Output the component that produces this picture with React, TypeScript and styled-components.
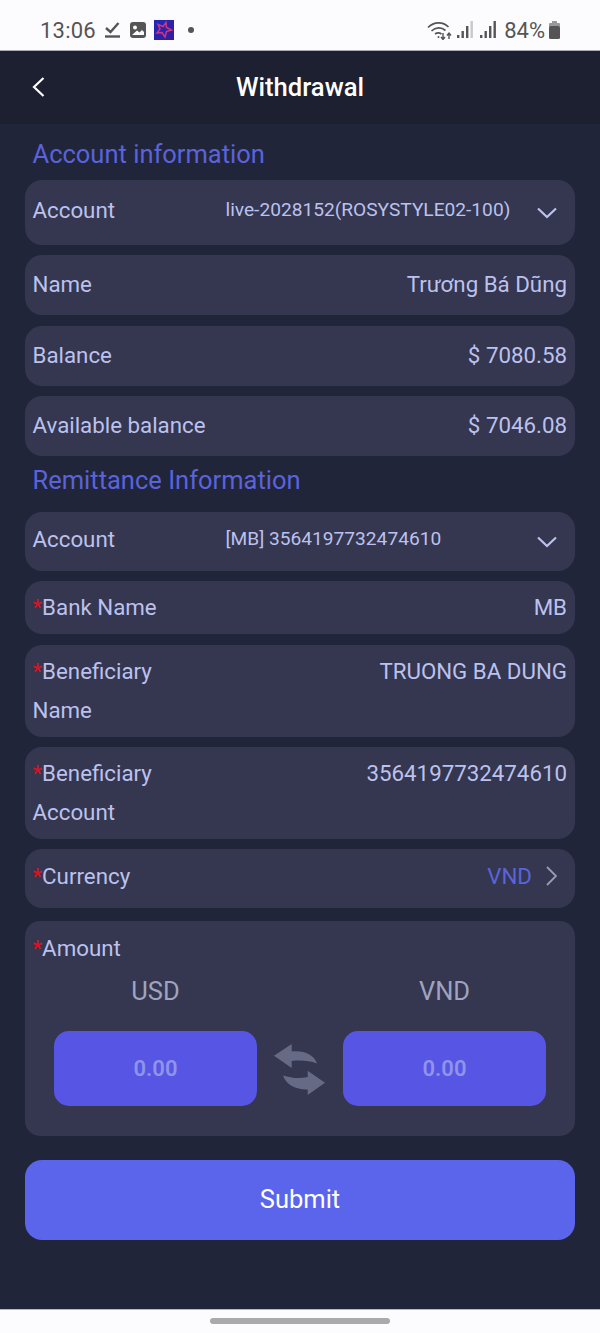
import React from "react";
import styled, { createGlobalStyle } from "styled-components";

const Global = createGlobalStyle`
  html, body { margin: 0; padding: 0; background: #212539; }
  * { box-sizing: border-box; }
`;

const Page = styled.div`
  width: 600px;
  height: 1333px;
  display: flex;
  flex-direction: column;
  overflow: hidden;
  font-family: Roboto, "Liberation Sans", sans-serif;
  background: #212539;
`;

const StatusBar = styled.div`
  height: 51px;
  flex: none;
  background: #fcfcfe;
  border-bottom: 1px solid #a9abb3;
  display: flex;
  align-items: center;
  justify-content: space-between;
  padding: 10px 40px 0;
  color: #555;
`;

const StatusGroup = styled.div`
  display: flex;
  align-items: center;
`;

const Clock = styled.span`
  font-size: 22px;
  letter-spacing: 0.2px;
  margin-right: 9px;
`;

const Percent = styled.span`
  font-size: 22px;
  margin: 0 4px 0 8px;
`;

const Header = styled.header`
  height: 73px;
  flex: none;
  background: #1c2030;
  display: flex;
  align-items: center;
  justify-content: center;
  padding-bottom: 2px;
  position: relative;
`;

const BackButton = styled.span`
  position: absolute;
  left: 32px;
  top: 25px;
  display: flex;
`;

const Title = styled.h1`
  margin: 0;
  font-size: 25.6px;
  font-weight: 500;
  color: #fff;
`;

const Content = styled.main`
  flex: 1;
  padding: 0 25px;
  display: flex;
  flex-direction: column;
`;

const SectionTitle = styled.h2<{ $top?: number; $bottom?: number }>`
  margin: 0;
  height: 56px;
  display: flex;
  align-items: center;
  padding: ${(p) => p.$top ?? 0}px 0 ${(p) => p.$bottom ?? 0}px 7.5px;
  font-size: 25.5px;
  font-weight: 400;
  color: #5a63dc;
`;

const Row = styled.div<{ $h: number; $mb?: number }>`
  height: ${(p) => p.$h}px;
  margin-bottom: ${(p) => p.$mb ?? 10}px;
  background: #34374f;
  border-radius: 17px;
  padding: 0 8px 2px 7.5px;
  display: flex;
  justify-content: space-between;
  align-items: center;
  font-size: 22.3px;
  color: #bcc1ee;
`;

const SelectRow = styled(Row)`
  padding-bottom: 6px;
`;

const CurrencyRow = styled(Row)`
  padding-bottom: 6px;
`;

const TallRow = styled(Row)`
  align-items: flex-start;
  padding-top: 7px;
  line-height: 38.5px;
`;

const Label = styled.span`
  display: block;
`;

const Line = styled.span`
  display: block;
`;

const Star = styled.span`
  color: #e1101f;
`;

const Value = styled.span``;

const SelectValue = styled.span`
  flex: 1;
  margin-left: 110.5px;
  font-size: 19.15px;
  white-space: nowrap;
`;

const Chevron = styled.span`
  display: flex;
  margin: 6px 10px 0 0;
`;

const CurrencyBox = styled.span`
  display: flex;
  align-items: center;
  gap: 14px;
  color: #5a63dc;
`;

const AmountCard = styled.section`
  height: 215px;
  margin-top: 3px;
  background: #34374f;
  border-radius: 15px;
  padding: 8px 29px 0;
`;

const AmountLabel = styled.div`
  margin-left: -21.5px;
  height: 38px;
  line-height: 38px;
  font-size: 22.3px;
  color: #bcc1ee;
`;

const Exchange = styled.div`
  display: grid;
  grid-template-columns: 203px 86px 203px;
  margin-top: 3px;
`;

const CurrencyName = styled.div`
  height: 42px;
  line-height: 42px;
  margin-bottom: 19px;
  text-align: center;
  font-size: 25.5px;
  color: #9fa3bf;
`;

const AmountField = styled.div`
  height: 75px;
  border-radius: 15px;
  background: #5755e3;
  display: flex;
  align-items: center;
  justify-content: center;
  font-size: 22px;
  font-weight: 600;
  color: #8f94ea;
`;

const SwapCell = styled.div`
  display: flex;
  align-items: center;
  justify-content: center;
  padding-top: 3px;
`;

const Submit = styled.button`
  height: 80px;
  width: 100%;
  margin-top: 24px;
  padding: 0 0 2px;
  border: 0;
  border-radius: 17px;
  background: #5a65ec;
  color: #fff;
  font-family: inherit;
  font-size: 25.5px;
`;

const NavBar = styled.footer`
  height: 24px;
  flex: none;
  background: #fcfcfe;
  border-top: 1px solid #b5b7bf;
  display: flex;
  justify-content: center;
  padding-top: 8px;
`;

const NavHandle = styled.div`
  width: 180px;
  height: 6px;
  border-radius: 3px;
  background: #aaaaac;
`;

const SignalGap = styled.span`
  width: 7px;
`;

const ChevronDown = () => (
  <svg width="20" height="12" viewBox="0 0 20 12" fill="none" stroke="#bcc1ee" strokeWidth="2.2">
    <path d="M1 1.5 L10 10 L19 1.5" />
  </svg>
);

const SignalBars = ({ last }: { last: string }) => (
  <svg width="16" height="18" viewBox="0 0 16 18">
    <rect x="0" y="14" width="2.4" height="3" fill="#555" />
    <rect x="4.5" y="10" width="2.4" height="7" fill="#555" />
    <rect x="9" y="5" width="2.4" height="12" fill="#555" />
    <rect x="13.5" y="0" width="2.4" height="17" fill={last} />
  </svg>
);

const App = () => (
  <Page>
    <Global />
    <StatusBar>
      <StatusGroup>
        <Clock>13:06</Clock>
        <svg width="15" height="16" viewBox="0 0 15 16" fill="none" stroke="#555" strokeWidth="2.4" style={{ marginRight: 10 }}>
          <path d="M1 6 L5.5 10 L13.5 1" />
          <path d="M0 14.5 H15" />
        </svg>
        <svg width="16" height="16" viewBox="0 0 16 16" style={{ marginRight: 8 }}>
          <rect width="16" height="16" rx="3" fill="#555" />
          <circle cx="5" cy="5.5" r="2" fill="#fcfcfe" />
          <path d="M2 13 L7 8.5 L9.5 10.5 L12 8 L14 10 V13 Z" fill="#fcfcfe" />
        </svg>
        <svg width="20" height="20" viewBox="0 0 20 20" style={{ marginRight: 14 }}>
          <defs>
            <linearGradient id="appBg" x1="0" y1="0" x2="1" y2="1">
              <stop offset="0" stopColor="#1d2bb8" />
              <stop offset="1" stopColor="#3a1a9c" />
            </linearGradient>
          </defs>
          <rect width="20" height="20" fill="url(#appBg)" />
          <path d="M12 2.5 L12.5 7.5 L17.5 10 L12.5 11.5 L11 17 L8 12.5 L3 13 L6 9 L4 4.5 L9 6.5 Z" fill="none" stroke="#d2357f" strokeWidth="1.5" />
        </svg>
        <svg width="6" height="6" viewBox="0 0 6 6">
          <circle cx="3" cy="3" r="3" fill="#555" />
        </svg>
      </StatusGroup>
      <StatusGroup>
        <svg width="25" height="19" viewBox="0 0 25 19" fill="none" stroke="#555" strokeWidth="1.7" style={{ marginRight: 5 }}>
          <path d="M1 6.5 C7 0.5 16 0.5 21.5 6" />
          <path d="M4.5 10 C8.5 6 14.5 6 18.5 9.5" />
          <path d="M8 13 C10 11.5 12.5 11.5 14.5 13" />
          <circle cx="11.5" cy="16" r="1" fill="#555" stroke="none" />
          <path d="M16 12 V18 M14 16 L16 18.5 L18 16" strokeWidth="1.4" />
          <path d="M22 18 V12.5 M20 14.5 L22 12 L24 14.5" strokeWidth="1.4" />
        </svg>
        <SignalBars last="#c8c8c8" />
        <SignalGap />
        <SignalBars last="#555" />
        <Percent>84%</Percent>
        <svg width="11" height="18" viewBox="0 0 11 18">
          <rect x="3" y="0" width="5" height="3" fill="#999" />
          <rect x="0" y="2" width="11" height="4" rx="1" fill="#999" />
          <rect x="0" y="5" width="11" height="13" rx="1.5" fill="#555" />
        </svg>
      </StatusGroup>
    </StatusBar>

    <Header>
      <BackButton>
        <svg width="13" height="22" viewBox="0 0 13 22" fill="none" stroke="#fff" strokeWidth="2.2">
          <path d="M11.5 2 L2 11 L11.5 20" />
        </svg>
      </BackButton>
      <Title>Withdrawal</Title>
    </Header>

    <Content>
      <SectionTitle $top={4}>Account information</SectionTitle>
      <SelectRow $h={65}>
        <Label>Account</Label>
        <SelectValue>live-2028152(ROSYSTYLE02-100)</SelectValue>
        <Chevron><ChevronDown /></Chevron>
      </SelectRow>
      <Row $h={60} $mb={11}>
        <Label>Name</Label>
        <Value>Trương Bá Dũng</Value>
      </Row>
      <Row $h={60}>
        <Label>Balance</Label>
        <Value>$ 7080.58</Value>
      </Row>
      <Row $h={60} $mb={0}>
        <Label>Available balance</Label>
        <Value>$ 7046.08</Value>
      </Row>
      <SectionTitle $bottom={8}>Remittance Information</SectionTitle>
      <SelectRow $h={59}>
        <Label>Account</Label>
        <SelectValue>[MB] 3564197732474610</SelectValue>
        <Chevron><ChevronDown /></Chevron>
      </SelectRow>
      <Row $h={53} $mb={11}>
        <Label><Star>*</Star>Bank Name</Label>
        <Value>MB</Value>
      </Row>
      <TallRow $h={92}>
        <Label>
          <Line><Star>*</Star>Beneficiary</Line>
          <Line>Name</Line>
        </Label>
        <Value>TRUONG BA DUNG</Value>
      </TallRow>
      <TallRow $h={92}>
        <Label>
          <Line><Star>*</Star>Beneficiary</Line>
          <Line>Account</Line>
        </Label>
        <Value>3564197732474610</Value>
      </TallRow>
      <CurrencyRow $h={59}>
        <Label><Star>*</Star>Currency</Label>
        <CurrencyBox>
          VND
          <svg width="11" height="20" viewBox="0 0 11 20" fill="none" stroke="#9a9cae" strokeWidth="1.8" style={{ marginRight: 10 }}>
            <path d="M1 1 L10 10 L1 19" />
          </svg>
        </CurrencyBox>
      </CurrencyRow>
      <AmountCard>
        <AmountLabel><Star>*</Star>Amount</AmountLabel>
        <Exchange>
          <CurrencyName>USD</CurrencyName>
          <div />
          <CurrencyName>VND</CurrencyName>
          <AmountField>0.00</AmountField>
          <SwapCell>
            <svg width="54" height="52" viewBox="8 9 54 52" fill="#676a85">
              <path d="M9 20.7 L26.7 9 V16.5 C40 15.5 49 20 52 28.5 C44 25.5 35 25 26.7 26 V33 Z" />
              <path d="M60 47.7 L42.7 35.7 V42 C34 44 26 43 18 40.5 C21 50 32 55 42.7 54.5 V60 Z" />
            </svg>
          </SwapCell>
          <AmountField>0.00</AmountField>
        </Exchange>
      </AmountCard>
      <Submit>Submit</Submit>
    </Content>

    <NavBar>
      <NavHandle />
    </NavBar>
  </Page>
);

export default App;
